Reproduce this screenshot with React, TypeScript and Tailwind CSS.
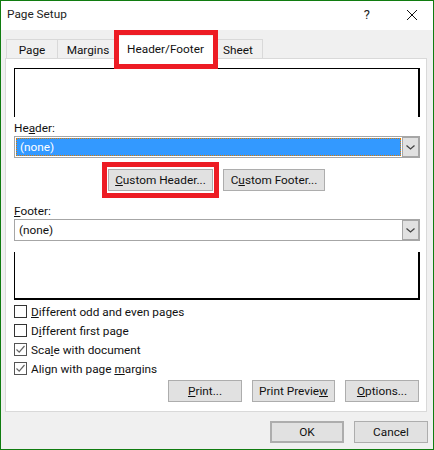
const font = { fontFamily: 'Roboto, "Noto Sans", sans-serif' };

function Btn({ children, className = "" }: { children: React.ReactNode; className?: string }) {
  return (
    <div className={`flex h-[22px] shrink-0 items-center justify-center border-[#adadad] bg-[#e1e1e1] pt-[2px] text-[11.8px] text-[#111] ${className}`}>
      {children}
    </div>
  );
}

function Combo({ children, selected }: { children: React.ReactNode; selected?: boolean }) {
  return (
    <div className="flex h-[22px] w-[406px] shrink-0 items-stretch border border-[#a6a6a6] bg-white text-[11.8px] text-[#111]">
      <div className="min-w-0 flex-1 p-px">
        <div className={`flex h-full items-center pl-[3px] pt-[2px] ${selected ? "border border-dotted border-[#e07b00] bg-[#3399ff] text-white" : ""}`}>{children}</div>
      </div>
      <div className="flex w-[17px] items-center justify-center border border-[#a6a6a6] bg-[#e1e1e1]">
        <svg width="9" height="5" viewBox="0 0 9 5" fill="none" stroke="#444" strokeWidth="1.3">
          <path d="M0.5 0.5 L4.5 4 L8.5 0.5" />
        </svg>
      </div>
    </div>
  );
}

function Option({ checked, children }: { checked?: boolean; children: React.ReactNode }) {
  return (
    <div className="flex h-[19px] items-center gap-[4px] text-[11.8px] text-[#111]">
      <div className={`flex h-[13px] w-[13px] items-center justify-center border bg-white ${checked ? "border-[#555]" : "border-[#333]"}`}>
        {checked && (
          <svg width="11" height="11" viewBox="0 0 11 11" fill="none" stroke="#666" strokeWidth="1.2">
            <path d="M1.5 5.5 L4.2 8.2 L9.5 2" />
          </svg>
        )}
      </div>
      <span className="pt-[2px]">{children}</span>
    </div>
  );
}

export default function App() {
  return (
    <div style={font} className="relative flex h-[450px] w-[434px] flex-col border border-[#107c10] bg-[#f0f0f0]">
      <div className="flex h-[29px] shrink-0 items-center justify-between bg-white pb-[2px] pl-[6px] pr-[16px] text-[11.8px] text-[#222]">
        <span>Page Setup</span>
        <div className="flex items-center gap-[37px]">
          <span className="text-[13px]">?</span>
          <svg width="10" height="10" viewBox="0 0 10 10" stroke="#111" strokeWidth="1">
            <path d="M0 0 L10 10 M10 0 L0 10" />
          </svg>
        </div>
      </div>

      <div className="ml-[5px] mt-[9px] flex h-[19px] shrink-0 items-stretch text-[11.8px] text-[#111]">
        <div className="flex w-[52px] items-center justify-center border border-b-0 border-[#d9d9d9] pt-[3px]">Page</div>
        <div className="flex w-[60px] items-center justify-center border-t border-[#d9d9d9] pt-[3px]">Margins</div>
        <div className="z-10 -mt-[3px] flex h-[27px] w-[95px] items-center justify-center bg-white pt-px">Header/Footer</div>
        <div className="flex w-[50px] items-center justify-center border border-b-0 border-[#d9d9d9] pt-[3px]">Sheet</div>
      </div>

      <div className="ml-[4px] flex h-[354px] w-[422px] shrink-0 flex-col border border-[#d9d9d9] bg-white pl-[8px] pt-[9px]">
        <div className="h-[49px] w-[406px] shrink-0 border-l border-r-2 border-t border-black" />
        <div className="mt-[2px] h-[17px] shrink-0 text-[11.8px] leading-[18px] text-[#111]">He<u>a</u>der:</div>
        <Combo selected>(none)</Combo>
        <div className="ml-[94px] mt-[11px] flex gap-[10px]">
          <Btn className="w-[105px] border"><span><u>C</u>ustom Header...</span></Btn>
          <Btn className="w-[102px] border"><span>C<u>u</u>stom Footer...</span></Btn>
        </div>
        <div className="mt-[11px] h-[17px] shrink-0 text-[11.8px] leading-[18px] text-[#111]"><u>F</u>ooter:</div>
        <Combo>(none)</Combo>
        <div className="mt-[11px] h-[48px] w-[406px] shrink-0 border-b-2 border-l border-r-2 border-black" />
        <div className="mt-[2px] flex shrink-0 flex-col">
          <Option><u>D</u>ifferent odd and even pages</Option>
          <Option>D<u>i</u>fferent first page</Option>
          <Option checked>Sca<u>l</u>e with document</Option>
          <Option checked>Align with page <u>m</u>argins</Option>
        </div>
        <div className="mt-[2px] flex gap-[10px] pl-[154px]">
          <Btn className="w-[74px] border"><span><u>P</u>rint...</span></Btn>
          <Btn className="w-[83px] border"><span>Print Previe<u>w</u></span></Btn>
          <Btn className="w-[74px] border"><span><u>O</u>ptions...</span></Btn>
        </div>
      </div>

      <div className="ml-[269px] mt-[9px] flex gap-[10px]">
        <Btn className="w-[74px] border-2 border-[#0078d7]">OK</Btn>
        <Btn className="w-[74px] border">Cancel</Btn>
      </div>

      <div className="absolute left-[113px] top-[29px] z-20 h-[39px] w-[104px] border-[5px] border-[#ed1c24]" />
      <div className="absolute left-[101px] top-[161px] z-20 h-[36px] w-[117px] border-[5px] border-[#ed1c24]" />
    </div>
  );
}
